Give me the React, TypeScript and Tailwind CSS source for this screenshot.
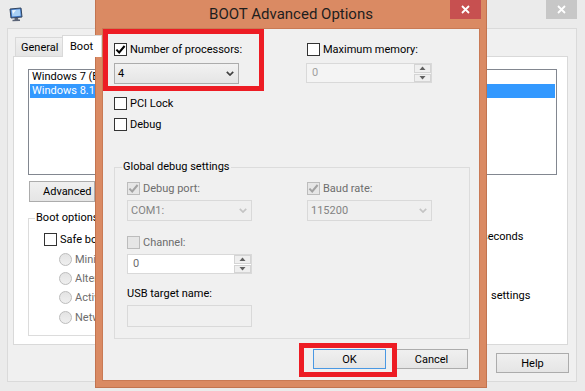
import type { ReactNode } from 'react';

function Check({ checked = false, disabled = false }: { checked?: boolean; disabled?: boolean }) {
  return (
    <span
      className={`flex h-[13px] w-[13px] shrink-0 items-center justify-center border ${
        disabled ? 'border-[#bcbcbc] bg-[#e6e6e6]' : 'border-[#333333] bg-white'
      }`}
    >
      {checked && (
        <svg width="11" height="11" viewBox="0 0 11 11">
          <path d="M1.4 5.6 L4.2 8.4 L9.6 2" fill="none" stroke={disabled ? '#a2a2a2' : '#000'} strokeWidth="2" />
        </svg>
      )}
    </span>
  );
}

function CheckRow({
  label,
  checked,
  disabled,
  className = '',
  labelClass = '',
}: {
  label: string;
  checked?: boolean;
  disabled?: boolean;
  className?: string;
  labelClass?: string;
}) {
  return (
    <div className={`flex h-[13px] items-center gap-[3px] whitespace-nowrap ${className}`}>
      <Check checked={checked} disabled={disabled} />
      <span className={`${disabled ? 'text-[#6d6d6d]' : 'text-black'} ${labelClass}`}>{label}</span>
    </div>
  );
}

// radios of the window behind: their labels run under the dialog, so cut them at its edge
function RadioRow({ label, className = '' }: { label: string; className?: string }) {
  return (
    <div className={`flex h-[13px] items-center gap-[3px] whitespace-nowrap ${className}`}>
      <span className="h-[13px] w-[13px] shrink-0 rounded-full border border-[#bcbcbc] bg-linear-to-b from-[#e3e3e3] to-[#efefef]" />
      <span className="max-w-[20px] overflow-hidden text-[#6d6d6d]">{label}</span>
    </div>
  );
}

function Chevron({ color }: { color: string }) {
  return (
    <svg width="8" height="5" viewBox="0 0 8 5">
      <path d="M0.8 0.8 L4 4 L7.2 0.8" fill="none" stroke={color} strokeWidth="1.7" />
    </svg>
  );
}

function Combo({ value, disabled }: { value: string; disabled?: boolean }) {
  return (
    <div
      className={`flex h-[21px] w-[125px] items-center justify-between border pl-[3px] pr-[4px] ${
        disabled
          ? 'border-[#d9d9d9] bg-[#efefef] text-[#838383]'
          : 'border-[#acacac] bg-linear-to-b from-[#f2f2f2] to-[#e5e5e5] text-black'
      }`}
    >
      <span>{value}</span>
      <Chevron color={disabled ? '#c4c4c4' : '#404040'} />
    </div>
  );
}

function SpinArrow({ up }: { up?: boolean }) {
  return (
    <svg width="7" height="4" viewBox="0 0 7 4">
      <path d={up ? 'M0.5 4 L3.5 0.5 L6.5 4 Z' : 'M0.5 0 L3.5 3.5 L6.5 0 Z'} fill="#606060" />
    </svg>
  );
}

function Spin({ value, white, w }: { value: string; white?: boolean; w: string }) {
  return (
    <div
      className={`flex h-[20px] border border-[#d9d9d9] ${w} ${
        white ? 'bg-white text-[#6d6d6d]' : 'bg-[#f4f4f4] text-[#a0a0a0]'
      }`}
    >
      <span className="flex-1 pl-[5px] leading-[18px]">{value}</span>
      <div className="flex w-[17px] flex-col gap-px">
        <div className="flex flex-1 items-center justify-center border border-[#d4d4d4] bg-[#efefef]">
          <SpinArrow up />
        </div>
        <div className="flex flex-1 items-center justify-center border border-[#d4d4d4] bg-[#efefef]">
          <SpinArrow />
        </div>
      </div>
    </div>
  );
}

function Btn({ children, focused, className = '' }: { children: ReactNode; focused?: boolean; className?: string }) {
  return (
    <button
      type="button"
      className={`flex h-[20px] items-center justify-center border bg-linear-to-b from-[#f0f0f0] to-[#e5e5e5] text-[11px] ${
        focused ? 'border-[#4a98e3]' : 'border-[#acacac]'
      } ${className}`}
    >
      {children}
    </button>
  );
}

function CloseX() {
  return (
    <svg width="9" height="9" viewBox="0 0 9 9">
      <path d="M1 1 L8 8 M8 1 L1 8" stroke="#fff" strokeWidth="1.8" />
    </svg>
  );
}

function MsIcon() {
  return (
    <svg width="14" height="15" viewBox="0 0 14 15" className="ml-[9px] mt-[7px]">
      <path d="M1 2 L12 1 L13 10 L2 11 Z" fill="#3f78c8" stroke="#34465f" strokeWidth="1" />
      <path d="M2.5 3 L11 2.3 L11.7 8.8 L3.2 9.6 Z" fill="#a8d0f5" />
      <path d="M3.2 3.2 L7 2.9 L4 7 Z" fill="#ffffff" opacity="0.8" />
      <path d="M5.5 11 L9 10.7 L9.3 12.5 L11 12.4 L11 14 L3.5 14.3 L3.5 12.8 L5.6 12.7 Z" fill="#5b6477" />
    </svg>
  );
}

function BootOptionsDialog() {
  return (
    <div className="absolute left-[95px] top-0 flex h-[388px] w-[392px] flex-col border border-t-0 border-[#c27450] bg-[#da8a63]">
      <div className="relative flex h-[28px] items-center justify-center text-[15px] text-[#1e1e1e]">
        BOOT Advanced Options
        <div className="absolute right-[5px] top-0 flex h-[19px] w-[31px] items-center justify-center bg-[#c75050]">
          <CloseX />
        </div>
      </div>

      <div className="relative mx-[6px] flex h-[353px] flex-col border border-[#c97a55] bg-[#f0f0f0] px-[11px] pt-[14px]">
        {/* highlight around number of processors */}
        <div className="absolute left-0 top-0 h-[62px] w-[161px] border-[5px] border-[#ed1c24]" />

        <div className="grid grid-cols-[192px_1fr]">
          <div className="flex flex-col">
            <CheckRow label="Number of processors:" checked />
            <div className="mt-[7px]">
              <Combo value="4" />
            </div>
            <CheckRow label="PCI Lock" className="mt-[13px]" />
            <CheckRow label="Debug" className="mt-[8px]" />
          </div>
          <div className="flex flex-col">
            <CheckRow label="Maximum memory:" className="ml-px" />
            <div className="mt-[7px]">
              <Spin value="0" w="w-[126px]" />
            </div>
          </div>
        </div>

        <fieldset className="mt-[28px] w-[356px] border border-[#dcdcdc]">
          <legend className="ml-[7px] px-[1px] leading-[16px]">Global debug settings</legend>
          <div className="grid grid-cols-[180px_1fr] pb-[11px] pl-[12px] pt-[7px]">
            <div className="flex flex-col">
              <CheckRow label="Debug port:" checked disabled />
              <div className="mt-[5px]">
                <Combo value="COM1:" disabled />
              </div>
              <CheckRow label="Channel:" disabled className="mt-[15px]" />
              <div className="mt-[5px]">
                <Spin value="0" white w="w-[125px]" />
              </div>
              <div className="mt-[12px] whitespace-nowrap leading-[16px]">USB target name:</div>
              <div className="mt-[3px] h-[22px] w-[125px] border border-[#d9d9d9] bg-[#f0f0f0]" />
            </div>
            <div className="flex flex-col">
              <CheckRow label="Baud rate:" checked disabled />
              <div className="mt-[5px]">
                <Combo value="115200" disabled />
              </div>
            </div>
          </div>
        </fieldset>

        <div className="mt-[10px] flex justify-end gap-[9px]">
          <Btn focused className="w-[73px]">OK</Btn>
          <Btn className="w-[73px]">Cancel</Btn>
        </div>

        {/* highlight around OK */}
        <div className="absolute left-[196px] top-[314px] h-[34px] w-[98px] border-[5px] border-[#ed1c24]" />
      </div>
    </div>
  );
}

export default function App() {
  return (
    <div className="relative h-[391px] w-[585px] overflow-hidden bg-[#ebebeb] font-['Roboto',sans-serif] text-[11px] leading-[15px] text-black">
      {/* System configuration window behind */}
      <div className="flex h-[28px] items-start">
        <MsIcon />
        <div className="ml-auto mr-[8px] flex h-[19px] w-[31px] items-center justify-center bg-[#c7c7c7]">
          <CloseX />
        </div>
      </div>

      <div className="ml-[7px] flex h-[354px] w-[570px] flex-col border border-[#dadada] bg-[#f0f0f0] pt-[6px]">
        <div className="ml-[7px] flex h-[21px] items-end">
          <div className="flex h-[19px] w-[48px] items-center border border-b-0 border-[#d9d9d9] bg-linear-to-b from-[#f0f0f0] to-[#e5e5e5] pl-[5px]">
            General
          </div>
          <div className="relative z-10 -mb-px -ml-px flex h-[22px] w-[40px] items-center border border-b-0 border-[#d9d9d9] bg-white pb-px pl-[7px]">
            Boot
          </div>
        </div>

        <div className="ml-[5px] flex h-[289px] w-[555px] flex-col border border-[#d9d9d9] bg-white pl-[14px] pt-[12px]">
          <div className="h-[106px] w-[529px] border border-[#828790] bg-white px-px">
            <div className="h-[14px] whitespace-nowrap pl-[2px] leading-[14px]">
              <span className="inline-block max-w-[63px] overflow-hidden align-top">Windows 7 (E:\Windows)</span>
            </div>
            <div className="h-[14px] whitespace-nowrap bg-[#3399ff] pl-[2px] leading-[14px] text-white">
              <span className="inline-block max-w-[63px] overflow-hidden align-top">Windows 8.1 (C:\Windows)</span>
            </div>
          </div>

          <Btn className="ml-px mt-[6px] !h-[21px] w-[66px] !justify-start overflow-hidden whitespace-nowrap pl-[13px]">
            Advanced options...
          </Btn>

          <div className="mt-[8px] flex">
            <fieldset className="w-[300px] border border-[#dcdcdc]">
              <legend className="ml-[6px] px-[1px] leading-[16px]">Boot options</legend>
              <div className="flex flex-col pb-[11px] pl-[15px] pt-[7px]">
                <CheckRow label="Safe boot" labelClass="max-w-[36px] overflow-hidden" />
                <RadioRow label="Minimal" className="ml-[15px] mt-[7px]" />
                <RadioRow label="Alternate shell" className="ml-[15px] mt-[6px]" />
                <RadioRow label="Active Directory repair" className="ml-[15px] mt-[6px]" />
                <RadioRow label="Network" className="ml-[15px] mt-[7px]" />
              </div>
            </fieldset>
            <div className="flex flex-col leading-[16px]">
              <span className="ml-[154px] mt-[19px]">seconds</span>
              <span className="ml-[163px] mt-[43px]">settings</span>
            </div>
          </div>
        </div>

        <div className="mr-[7px] mt-[8px] flex justify-end">
          <Btn className="w-[73px]">Help</Btn>
        </div>
      </div>

      <BootOptionsDialog />
    </div>
  );
}
